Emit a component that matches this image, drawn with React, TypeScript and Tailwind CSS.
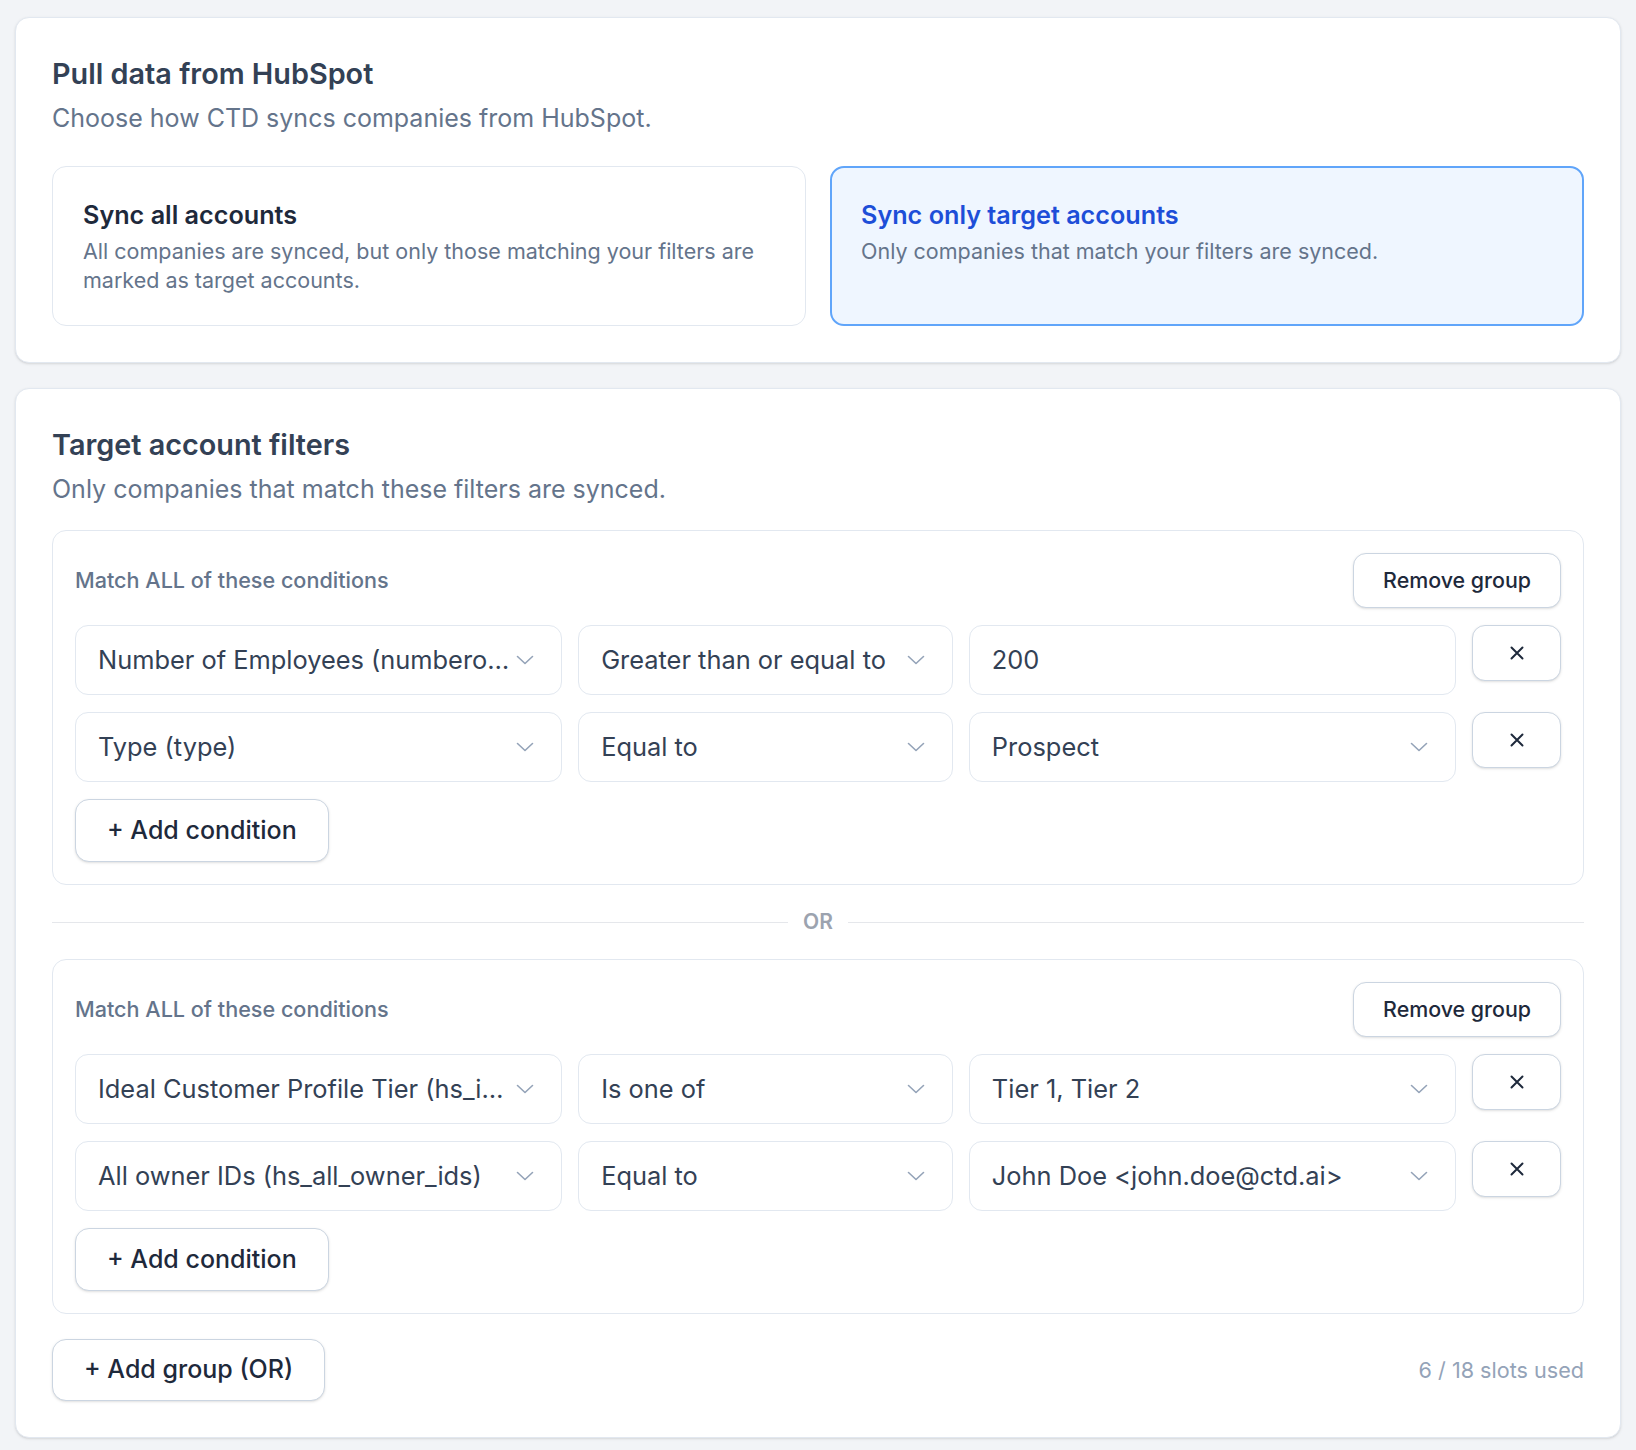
import React from 'react';

type Condition = {
  field: string;
  op: string;
  value: string;
  valueIsSelect: boolean;
};

const groups: Condition[][] = [
  [
    { field: 'Number of Employees (numberofemployees)', op: 'Greater than or equal to', value: '200', valueIsSelect: false },
    { field: 'Type (type)', op: 'Equal to', value: 'Prospect', valueIsSelect: true },
  ],
  [
    { field: 'Ideal Customer Profile Tier (hs_ideal_customer_profile)', op: 'Is one of', value: 'Tier 1, Tier 2', valueIsSelect: true },
    { field: 'All owner IDs (hs_all_owner_ids)', op: 'Equal to', value: 'John Doe <john.doe@ctd.ai>', valueIsSelect: true },
  ],
];

const Chevron = () => (
  <svg width="18" height="10" viewBox="0 0 18 10" fill="none" className="shrink-0">
    <path d="M1.5 1.5 9 8.5l7.5-7" stroke="#94a3b8" strokeWidth="1.6" strokeLinecap="round" strokeLinejoin="round" />
  </svg>
);

const Close = () => (
  <svg width="14" height="14" viewBox="0 0 14 14" fill="none">
    <path d="M1.5 1.5l11 11M12.5 1.5l-11 11" stroke="#1e293b" strokeWidth="2" strokeLinecap="round" />
  </svg>
);

const SelectBox: React.FC<{ text: string; chevron?: boolean }> = ({ text, chevron = true }) => (
  <div className="flex h-[70px] min-w-0 items-center gap-[4px] rounded-[13px] border border-[#e2e8f0] bg-white pl-[22px] pr-[27px] text-[25.4px] text-[#334155]">
    <span className="min-w-0 flex-1 truncate">{text}</span>
    {chevron && <Chevron />}
  </div>
);

const FilterGroup: React.FC<{ conditions: Condition[] }> = ({ conditions }) => (
  <div className="flex flex-col gap-[17px] rounded-[14px] border border-[#e2e8f0] p-[22px]">
    <div className="flex items-center justify-between">
      <span className="text-[21.6px] font-medium text-[#64748b]">Match ALL of these conditions</span>
      <button className="h-[55px] rounded-[13px] border border-[#cbd5e1] bg-white px-[29px] text-[21.4px] font-medium text-[#1e293b] shadow-sm">
        Remove group
      </button>
    </div>
    {conditions.map((c) => (
      <div key={c.field} className="grid grid-cols-[minmax(0,1.3fr)_minmax(0,1fr)_minmax(0,1.3fr)_89px] items-start gap-4">
        <SelectBox text={c.field} />
        <SelectBox text={c.op} />
        <SelectBox text={c.value} chevron={c.valueIsSelect} />
        <button className="flex h-[56px] items-center justify-center rounded-[13px] border border-[#cbd5e1] bg-white shadow-sm">
          <Close />
        </button>
      </div>
    ))}
    <div>
      <button className="h-[63px] rounded-[14px] border border-[#cbd5e1] bg-white px-[31px] text-[25px] font-medium text-[#1e293b] shadow-sm">
        + Add condition
      </button>
    </div>
  </div>
);

export default function App() {
  return (
    <div className="min-h-screen bg-[#f2f4f7] px-[15px] py-[17px] font-['Inter',sans-serif]">
      <div className="flex flex-col gap-[25px]">
        {/* Sync mode */}
        <section className="rounded-[14px] border border-[#e2e8f0] bg-white p-9 shadow-sm">
          <h2 className="text-[28.8px] font-semibold leading-[40px] text-[#334155]">Pull data from HubSpot</h2>
          <p className="mt-[6px] text-[25px] leading-[36px] text-[#64748b]">Choose how CTD syncs companies from HubSpot.</p>
          <div className="mt-[30px] grid grid-cols-2 gap-6">
            <div className="rounded-[14px] border border-[#e2e8f0] bg-white p-[30px]">
              <div className="text-[25.2px] font-semibold leading-[36px] text-[#1e293b]">Sync all accounts</div>
              <p className="mt-[4px] text-[21.5px] leading-[29px] text-[#64748b]">
                All companies are synced, but only those matching your filters are marked as target accounts.
              </p>
            </div>
            <div className="rounded-[14px] border-2 border-[#60a5fa] bg-[#eff6ff] p-[29px]">
              <div className="text-[25.2px] font-semibold leading-[36px] text-[#1d4ed8]">Sync only target accounts</div>
              <p className="mt-[4px] text-[21.5px] leading-[29px] text-[#64748b]">
                Only companies that match your filters are synced.
              </p>
            </div>
          </div>
        </section>

        {/* Filters */}
        <section className="rounded-[14px] border border-[#e2e8f0] bg-white p-9 shadow-sm">
          <h2 className="text-[28.8px] font-semibold leading-[40px] text-[#334155]">Target account filters</h2>
          <p className="mt-[6px] text-[25px] leading-[36px] text-[#64748b]">Only companies that match these filters are synced.</p>
          <div className="mt-[23px] flex flex-col gap-6">
            {groups.map((g, i) => (
              <React.Fragment key={i}>
                {i > 0 && (
                  <div className="flex items-center gap-[15px]">
                    <div className="h-px flex-1 bg-[#e5e7eb]" />
                    <span className="text-[21px] font-semibold leading-[26px] text-[#9ca3af]">OR</span>
                    <div className="h-px flex-1 bg-[#e5e7eb]" />
                  </div>
                )}
                <FilterGroup conditions={g} />
              </React.Fragment>
            ))}
          </div>
          <div className="mt-[25px] flex items-center justify-between">
            <button className="h-[62px] rounded-[14px] border border-[#cbd5e1] bg-white px-[31px] text-[25px] font-medium text-[#1e293b] shadow-sm">
              + Add group (OR)
            </button>
            <span className="text-[21.6px] text-[#94a3b8]">6 / 18 slots used</span>
          </div>
        </section>
      </div>
    </div>
  );
}
